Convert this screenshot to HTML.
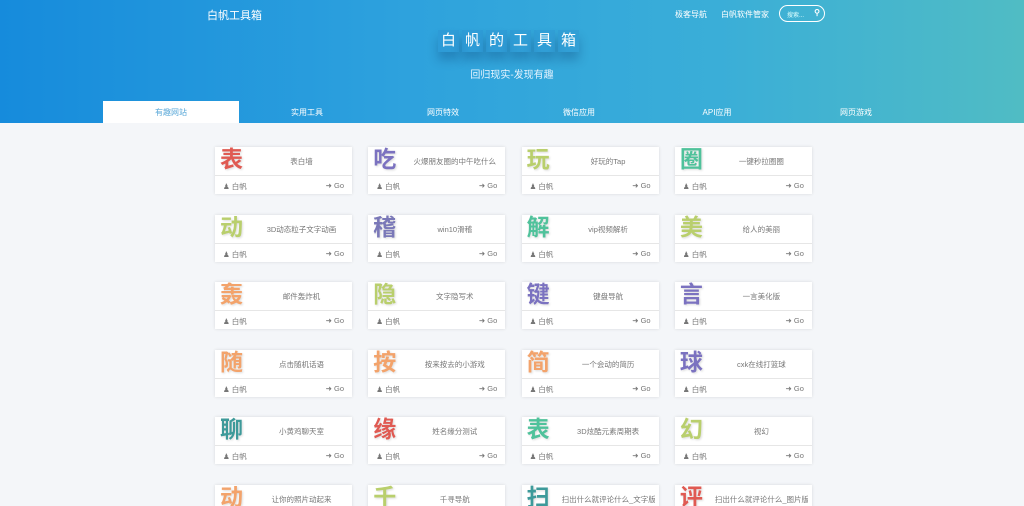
<!DOCTYPE html><html><head><meta charset="utf-8"><style>
*{margin:0;padding:0;box-sizing:border-box}
html,body{width:1024px;height:506px;overflow:hidden}
body{background:#f4f6f9;font-family:"Liberation Sans","Noto Sans CJK SC",sans-serif;position:relative}
.hd{position:absolute;left:0;top:0;width:1024px;height:123px;background:linear-gradient(90deg,#168bdc 0%,#2ea2dd 40%,#3aaed8 70%,#50bcc4 100%)}
.logo{position:absolute;left:207px;top:7px;color:#fff;font-size:11px}
.nav{position:absolute;top:9px;color:#fff;font-size:8px}
.search{position:absolute;left:779px;top:5px;width:46px;height:17px;border:1.5px solid #fff;border-radius:9px;color:#dff;font-size:6px;padding:4px 0 0 7px}
.search b{position:absolute;right:4px;top:2px;font-size:8px;color:#fff}
.title{position:absolute;left:438px;top:30px;display:flex;gap:3px}
.title span{display:block;width:21px;height:22px;color:#fff;font-size:15px;text-align:center;line-height:22px;background:rgba(40,130,200,.25);box-shadow:0 8px 10px rgba(0,40,90,.25)}
.sub{position:absolute;left:0;width:1024px;top:66px;text-align:center;color:#e6f4ff;font-size:10px}
.tab{position:absolute;top:101px;height:22px;width:136px;text-align:center;line-height:23px;color:#fff;font-size:8px}
.tab.on{background:#fff;color:#5aa8d8}
.grid{position:absolute;left:215px;top:147px;width:600px;display:grid;grid-template-columns:repeat(4,137px);column-gap:16.3px;row-gap:20.6px}
.c{height:47px;background:#fff;box-shadow:0 0 3px rgba(0,0,0,.12);position:relative}
.c .t{height:29px;border-bottom:1px solid #e6e6e6;position:relative}
.c .k{position:absolute;left:5px;top:-1px;font-size:23px;line-height:26px;font-weight:bold;text-shadow:1px 1px 2px rgba(0,0,0,.15)}
.c .n{position:absolute;left:40px;right:4px;top:9px;text-align:center;font-size:7.5px;color:#777;white-space:nowrap;overflow:hidden}
.c .f{font-size:7.5px;color:#777;padding:5px 8px 0 8px;display:flex;justify-content:space-between}
</style></head><body>
<div class="hd">
<div class="logo">白帆工具箱</div>
<div class="nav" style="left:675px">极客导航</div>
<div class="nav" style="left:721px">白帆软件管家</div>
<div class="search">搜索...<b>&#9906;</b></div>
<div class="title"><span>白</span><span>帆</span><span>的</span><span>工</span><span>具</span><span>箱</span></div>
<div class="sub">回归现实-发现有趣</div>
<div class="tab on" style="left:103px">有趣网站</div>
<div class="tab" style="left:239px">实用工具</div>
<div class="tab" style="left:375px">网页特效</div>
<div class="tab" style="left:511px">微信应用</div>
<div class="tab" style="left:649px">API应用</div>
<div class="tab" style="left:788px">网页游戏</div>
</div>
<div class="grid">
<div class="c"><div class="t"><span class="k" style="color:#e05a52">表</span><span class="n">表白墙</span></div><div class="f"><span>&#9823; 白帆</span><span>&#10140; Go</span></div></div>
<div class="c"><div class="t"><span class="k" style="color:#7b72c0">吃</span><span class="n">火爆朋友圈的中午吃什么</span></div><div class="f"><span>&#9823; 白帆</span><span>&#10140; Go</span></div></div>
<div class="c"><div class="t"><span class="k" style="color:#b9cf6c">玩</span><span class="n">好玩的Tap</span></div><div class="f"><span>&#9823; 白帆</span><span>&#10140; Go</span></div></div>
<div class="c"><div class="t"><span class="k" style="color:#4fc29b">圈</span><span class="n">一键秒拉圈圈</span></div><div class="f"><span>&#9823; 白帆</span><span>&#10140; Go</span></div></div>
<div class="c"><div class="t"><span class="k" style="color:#b9cf6c">动</span><span class="n">3D动态粒子文字动画</span></div><div class="f"><span>&#9823; 白帆</span><span>&#10140; Go</span></div></div>
<div class="c"><div class="t"><span class="k" style="color:#7a78b8">稽</span><span class="n">win10滑稽</span></div><div class="f"><span>&#9823; 白帆</span><span>&#10140; Go</span></div></div>
<div class="c"><div class="t"><span class="k" style="color:#4fc29b">解</span><span class="n">vip视频解析</span></div><div class="f"><span>&#9823; 白帆</span><span>&#10140; Go</span></div></div>
<div class="c"><div class="t"><span class="k" style="color:#b9cf6c">美</span><span class="n">给人的美丽</span></div><div class="f"><span>&#9823; 白帆</span><span>&#10140; Go</span></div></div>
<div class="c"><div class="t"><span class="k" style="color:#f3a36b">轰</span><span class="n">邮件轰炸机</span></div><div class="f"><span>&#9823; 白帆</span><span>&#10140; Go</span></div></div>
<div class="c"><div class="t"><span class="k" style="color:#b9cf6c">隐</span><span class="n">文字隐写术</span></div><div class="f"><span>&#9823; 白帆</span><span>&#10140; Go</span></div></div>
<div class="c"><div class="t"><span class="k" style="color:#7b72c0">键</span><span class="n">键盘导航</span></div><div class="f"><span>&#9823; 白帆</span><span>&#10140; Go</span></div></div>
<div class="c"><div class="t"><span class="k" style="color:#7b72c0">言</span><span class="n">一言美化版</span></div><div class="f"><span>&#9823; 白帆</span><span>&#10140; Go</span></div></div>
<div class="c"><div class="t"><span class="k" style="color:#f3a36b">随</span><span class="n">点击随机话语</span></div><div class="f"><span>&#9823; 白帆</span><span>&#10140; Go</span></div></div>
<div class="c"><div class="t"><span class="k" style="color:#f3a36b">按</span><span class="n">按来按去的小游戏</span></div><div class="f"><span>&#9823; 白帆</span><span>&#10140; Go</span></div></div>
<div class="c"><div class="t"><span class="k" style="color:#f3a36b">简</span><span class="n">一个会动的简历</span></div><div class="f"><span>&#9823; 白帆</span><span>&#10140; Go</span></div></div>
<div class="c"><div class="t"><span class="k" style="color:#7b72c0">球</span><span class="n">cxk在线打篮球</span></div><div class="f"><span>&#9823; 白帆</span><span>&#10140; Go</span></div></div>
<div class="c"><div class="t"><span class="k" style="color:#3d9a9a">聊</span><span class="n">小黄鸡聊天室</span></div><div class="f"><span>&#9823; 白帆</span><span>&#10140; Go</span></div></div>
<div class="c"><div class="t"><span class="k" style="color:#e05a52">缘</span><span class="n">姓名缘分测试</span></div><div class="f"><span>&#9823; 白帆</span><span>&#10140; Go</span></div></div>
<div class="c"><div class="t"><span class="k" style="color:#4fc29b">表</span><span class="n">3D炫酷元素周期表</span></div><div class="f"><span>&#9823; 白帆</span><span>&#10140; Go</span></div></div>
<div class="c"><div class="t"><span class="k" style="color:#b9cf6c">幻</span><span class="n">视幻</span></div><div class="f"><span>&#9823; 白帆</span><span>&#10140; Go</span></div></div>
<div class="c"><div class="t"><span class="k" style="color:#f3a36b">动</span><span class="n">让你的照片动起来</span></div><div class="f"><span>&#9823; 白帆</span><span>&#10140; Go</span></div></div>
<div class="c"><div class="t"><span class="k" style="color:#b9cf6c">千</span><span class="n">千寻导航</span></div><div class="f"><span>&#9823; 白帆</span><span>&#10140; Go</span></div></div>
<div class="c"><div class="t"><span class="k" style="color:#3d9a9a">扫</span><span class="n">扫出什么就评论什么_文字版</span></div><div class="f"><span>&#9823; 白帆</span><span>&#10140; Go</span></div></div>
<div class="c"><div class="t"><span class="k" style="color:#e05a52">评</span><span class="n">扫出什么就评论什么_图片版</span></div><div class="f"><span>&#9823; 白帆</span><span>&#10140; Go</span></div></div>
</div>
</body></html>
